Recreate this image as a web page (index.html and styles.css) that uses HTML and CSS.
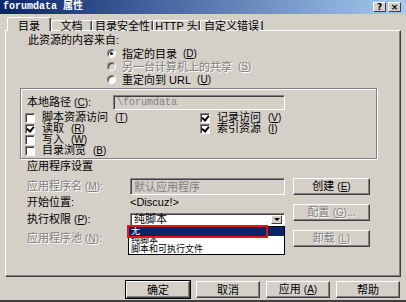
FILE: index.html
```html
<!DOCTYPE html>
<html lang="zh-CN">
<head>
    <meta charset="UTF-8">
    <title>forumdata 属性</title>
    <link rel="stylesheet" href="styles.css">
</head>
<body>
<div class="window">

    <!-- 标题栏 -->
    <div class="titlebar">
        <span class="title">forumdata 属性</span>
        <div class="title-buttons">
            <span class="tb-btn">?</span>
            <span class="tb-btn">×</span>
        </div>
    </div>

    <!-- 选项卡 -->
    <div class="tabs">
        <div class="tab active" style="width:44px">目录</div>
        <div class="tab" style="width:41px">文档</div>
        <div class="tab" style="width:61px">目录安全性</div>
        <div class="tab" style="width:47px">HTTP 头</div>
        <div class="tab" style="width:63px">自定义错误</div>
    </div>

    <div class="panel">
        <div class="source-label">此资源的内容来自:</div>
        <div class="radios">
            <div class="radio"><span class="radio-dot checked"></span>指定的目录 <span class="key">(<u>D</u>)</span></div>
            <div class="radio muted"><span class="radio-dot disabled"></span>另一台计算机上的共享 <span class="key">(<u>S</u>)</span></div>
            <div class="radio"><span class="radio-dot"></span>重定向到 URL <span class="key">(<u>U</u>)</span></div>
        </div>

        <div class="group">
            <div class="path-row">
                <span class="path-label">本地路径 <span class="key">(<u>C</u>)</span>:</span>
                <span class="input disabled">\forumdata</span>
            </div>
            <div class="checks">
                <div class="check"><span class="box"></span>脚本资源访问 <span class="key">(<u>T</u>)</span></div>
                <div class="check"><span class="box checked"></span>记录访问 <span class="key">(<u>V</u>)</span></div>
                <div class="check"><span class="box checked"></span>读取 <span class="key">(<u>R</u>)</span></div>
                <div class="check"><span class="box checked"></span>索引资源 <span class="key">(<u>I</u>)</span></div>
                <div class="check"><span class="box"></span>写入 <span class="key">(<u>W</u>)</span></div>
                <div class="check"></div>
                <div class="check"><span class="box"></span>目录浏览 <span class="key">(<u>B</u>)</span></div>
            </div>
        </div>

        <div class="app-title">应用程序设置</div>
        <div class="app">
            <div class="app-fields">
                <div class="field-row r-name">
                    <span class="field-label muted">应用程序名 <span class="key">(<u>M</u>)</span>:</span>
                    <span class="input disabled">默认应用程序</span>
                </div>
                <div class="field-row r-start">
                    <span class="field-label">开始位置:</span>
                    <span class="start-value">&lt;Discuz!&gt;</span>
                </div>
                <div class="field-row r-exec">
                    <span class="field-label">执行权限 <span class="key">(<u>P</u>)</span>:</span>
                    <div class="select">
                        <span class="select-text">纯脚本</span>
                        <span class="select-arrow"></span>
                        <div class="dropdown">
                            <div class="option selected">无</div>
                            <div class="option">纯脚本</div>
                            <div class="option">脚本和可执行文件</div>
                        </div>
                        <div class="mark-box"></div>
                    </div>
                </div>
                <div class="field-row r-pool">
                    <span class="field-label muted">应用程序池 <span class="key">(<u>N</u>)</span>:</span>
                </div>
            </div>
            <div class="app-buttons">
                <button class="btn">创建 <span class="key">(<u>E</u>)</span></button>
                <button class="btn muted">配置 <span class="key">(<u>G</u>)...</span></button>
                <button class="btn muted">卸载 <span class="key">(<u>L</u>)</span></button>
            </div>
        </div>
    </div>

    <div class="footer">
        <button class="btn default">确定</button>
        <button class="btn">取消</button>
        <button class="btn">应用 <span class="key">(<u>A</u>)</span></button>
        <button class="btn">帮助</button>
    </div>
</div>
</body>
</html>
```

FILE: styles.css
```css
* {
    box-sizing: border-box;
}

body {
    margin: 0;
    background-color: #d4d0c8;
    font-family: "Liberation Sans", "Noto Sans CJK SC", sans-serif;
    font-size: 11px;
    line-height: 12px;
    color: #000000;
}

.window {
    width: 406px;
    height: 302px;
    overflow: hidden;
    border-bottom: 2px solid #404040;
}

u {
    text-decoration: underline;
    text-underline-offset: 1px;
}

.key {
    font-size: 10px;
}

/* 标题栏 */
.titlebar {
    height: 14px;
    display: flex;
    align-items: center;
    justify-content: space-between;
    padding: 0 5px 0 3px;
    background: linear-gradient(to right, #0a246a, #a6caf0);
}

.title {
    color: #ffffff;
    font-family: "Liberation Mono", "Noto Sans CJK SC", monospace;
    font-weight: bold;
    font-size: 10px;
}

.title-buttons {
    display: flex;
    gap: 2px;
}

.tb-btn {
    width: 13px;
    height: 10px;
    background-color: #d4d0c8;
    border: 1px solid;
    border-color: #ffffff #404040 #404040 #ffffff;
    font-family: "DejaVu Sans", sans-serif;
    font-weight: bold;
    font-size: 9px;
    line-height: 8px;
    text-align: center;
}

/* 选项卡 */
.tabs {
    display: flex;
    align-items: flex-end;
    height: 13px;
    margin: 3px 0 0 7px;
}

.tab {
    height: 10px;
    line-height: 10px;
    text-align: center;
    white-space: nowrap;
    border-top: 1px solid #ffffff;
    border-left: 1px solid #ffffff;
    border-right: 1px solid #404040;
    box-shadow: inset -1px 0 #808080;
    border-radius: 2px 2px 0 0;
}

.tab.active {
    height: 14px;
    margin-bottom: -1px;
    padding-top: 3px;
    position: relative;
    z-index: 1;
    background-color: #d4d0c8;
}

/* 主面板 */
.panel {
    height: 247px;
    margin: 0 5px;
    border: 1px solid;
    border-color: #ffffff #404040 #404040 #ffffff;
    box-shadow: inset -1px -1px #808080;
}

.source-label {
    margin: 3px 0 0 22px;
}

.radios {
    margin: 1px 0 0 101px;
}

.radio {
    display: flex;
    align-items: center;
    gap: 6px;
    height: 13px;
    white-space: nowrap;
}

.radio-dot {
    width: 9px;
    height: 9px;
    border-radius: 50%;
    background-color: #ffffff;
    border: 1px solid;
    border-color: #808080 #ffffff #ffffff #808080;
    box-shadow: inset 1px 1px #404040;
    display: flex;
    align-items: center;
    justify-content: center;
}

.radio-dot.checked::after {
    content: "";
    width: 3px;
    height: 3px;
    border-radius: 50%;
    background-color: #000000;
}

.radio-dot.disabled {
    background-color: #d4d0c8;
}

/* 本地路径 */
.group {
    width: 357px;
    height: 71px;
    margin: 2px 0 0 14px;
    padding: 6px 0 0 6px;
    border: 1px solid #808080;
    box-shadow: inset 1px 1px #ffffff, 1px 1px #ffffff;
}

.path-row {
    display: flex;
    align-items: center;
    height: 15px;
    white-space: nowrap;
}

.path-label {
    width: 86px;
}

.input {
    height: 15px;
    width: 172px;
    padding: 1px 0 0 3px;
    border: 1px solid;
    border-color: #808080 #ffffff #ffffff #808080;
    box-shadow: inset 1px 1px #404040;
    background-color: #ffffff;
    white-space: nowrap;
}

.input.disabled {
    background-color: #d4d0c8;
    color: #808080;
}

.path-row .input {
    font-family: "Liberation Mono", monospace;
    font-size: 10px;
}

.checks {
    display: grid;
    grid-template-columns: 175px auto;
    grid-auto-rows: 11px;
    line-height: 11px;
    margin: 2px 0 0 -2px;
}

.check {
    display: flex;
    align-items: center;
    gap: 7px;
    white-space: nowrap;
}

.box {
    width: 10px;
    height: 10px;
    background-color: #ffffff;
    border: 1px solid;
    border-color: #808080 #ffffff #ffffff #808080;
    box-shadow: inset 1px 1px #404040;
    position: relative;
}

.box.checked::after {
    content: "";
    position: absolute;
    left: 2px;
    top: 0px;
    width: 3px;
    height: 5px;
    border-right: 2px solid #000000;
    border-bottom: 2px solid #000000;
    transform: rotate(40deg);
}

/* 应用程序设置 */
.app-title {
    margin: 1px 0 0 21px;
}

.app {
    display: flex;
    margin: 6px 0 0 21px;
}

.app-fields {
    width: 258px;
}

.field-row {
    display: flex;
    align-items: center;
    white-space: nowrap;
}

.field-label {
    width: 103px;
}

.r-name {
    height: 17px;
}

.r-name .input {
    height: 17px;
    width: 155px;
    padding-top: 2px;
}

.r-start {
    height: 13px;
}

.r-exec {
    height: 13px;
    margin-top: 5px;
}

.r-pool {
    height: 14px;
    margin-top: 5px;
}

.select {
    position: relative;
    width: 155px;
    height: 13px;
    background-color: #ffffff;
    border: 1px solid;
    border-color: #808080 #ffffff #ffffff #808080;
    box-shadow: inset 1px 1px #404040;
    display: flex;
    align-items: center;
    justify-content: space-between;
    padding: 0 2px 0 3px;
}

.select-text {
    line-height: 11px;
}

.select-arrow {
    width: 11px;
    height: 9px;
    background-color: #d4d0c8;
    border: 1px solid;
    border-color: #ffffff #404040 #404040 #ffffff;
    display: flex;
    align-items: center;
    justify-content: center;
}

.select-arrow::after {
    content: "";
    border-left: 3px solid transparent;
    border-right: 3px solid transparent;
    border-top: 3px solid #000000;
}

.dropdown {
    position: absolute;
    left: -3px;
    top: 12px;
    width: 157px;
    height: 29px;
    background-color: #ffffff;
    border: 1px solid #000000;
    overflow: hidden;
    font-size: 9px;
    line-height: 9px;
    white-space: nowrap;
    z-index: 2;
}

.option {
    height: 9px;
    padding-left: 2px;
}

.option.selected {
    background-color: #0a246a;
    color: #ffffff;
}

.mark-box {
    position: absolute;
    left: -4px;
    top: 11px;
    width: 141px;
    height: 13px;
    border: 2px solid #e8141b;
    z-index: 3;
}

.app-buttons {
    display: flex;
    flex-direction: column;
    gap: 9px;
    margin-left: 8px;
}

/* 按钮 */
.btn {
    width: 77px;
    height: 17px;
    padding: 0;
    font-family: "Liberation Sans", "Noto Sans CJK SC", sans-serif;
    font-size: 11px;
    line-height: 12px;
    background-color: #d4d0c8;
    border: 1px solid;
    border-color: #ffffff #404040 #404040 #ffffff;
    box-shadow: inset -1px -1px #808080;
    color: #000000;
    white-space: nowrap;
}

.muted,
.btn.muted {
    color: #808080;
    text-shadow: 1px 1px 0 #ffffff;
}

.footer {
    display: flex;
    justify-content: flex-end;
    gap: 6px;
    margin: 4px 6px 0 0;
}

.footer .btn {
    width: 64px;
}

.btn.default {
    outline: 1px solid #000000;
}
```
